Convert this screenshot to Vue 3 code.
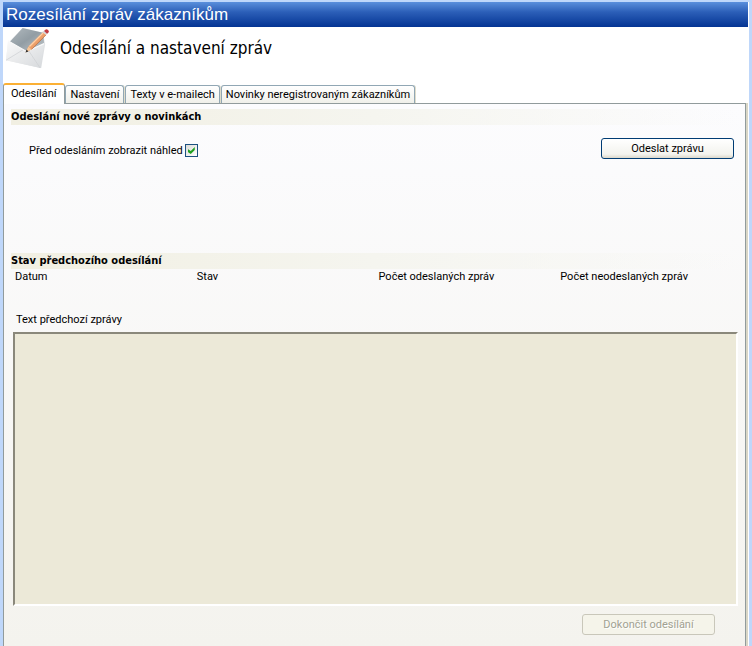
<template>
  <div class="window">
    <h1 class="title-bar">Rozesílání zpráv zákazníkům</h1>

    <header class="page-header">
      <svg class="mail-icon" viewBox="0 0 44 44" aria-hidden="true">
        <defs>
          <linearGradient id="paper" x1="0" y1="0" x2="1" y2="1">
            <stop offset="0" stop-color="#fafafa" />
            <stop offset="1" stop-color="#d6d9dc" />
          </linearGradient>
          <linearGradient id="inside" x1="0" y1="0" x2="1" y2="1">
            <stop offset="0" stop-color="#b3bbc0" />
            <stop offset="0.5" stop-color="#929da4" />
            <stop offset="1" stop-color="#c3c9cd" />
          </linearGradient>
        </defs>
        <path d="M2 16 L17 1 L38 6 L40 18 L36 42 L0 34 Z" fill="url(#paper)" />
        <path d="M3 16 L17 1 L38 6 L39 17 L21 26 Z" fill="url(#inside)" />
        <path d="M2 14 L21 25 L39 17 L35 42 L0 34 Z" fill="url(#paper)" />
        <path d="M0 34 L18 23 M35 42 L23 24" fill="none" stroke="#cfd2d5" stroke-width="0.8" />
        <path d="M2 14 L21 25 L39 17" fill="none" stroke="#fafafa" stroke-width="1.2" />
        <path d="M20 26 L23 20 L38 5 L41 8 L26 23 Z" fill="#eda06a" />
        <path d="M24 20 L38 6" stroke="#ffd0a5" stroke-width="1.4" />
        <path d="M26 23 L41 8" stroke="#bd6b3d" stroke-width="0.8" />
        <path d="M20 26 L23 20 L26 23 Z" fill="#f4c79b" />
        <path d="M20 26 L21 23 L23 25 Z" fill="#333" />
        <path d="M37 5 L40 3 L43 6 L41 8 Z" fill="#d5d8dc" />
        <path d="M39 4 Q41 1 43 3 Q45 5 42 7 Z" fill="#c33b43" />
      </svg>
      <h2>Odesílání a nastavení zpráv</h2>
    </header>

    <div class="tabs" role="tablist">
      <button
        v-for="tab in tabs"
        :key="tab"
        type="button"
        role="tab"
        class="tab"
        :class="{ active: tab === activeTab }"
        :aria-selected="tab === activeTab"
        @click="activeTab = tab"
      >{{ tab }}</button>
    </div>

    <main class="panel">
      <section class="send-section">
        <h3>Odeslání nové zprávy o novinkách</h3>
        <div class="send-row">
          <label class="preview">
            Před odesláním zobrazit náhled
            <input v-model="preview" type="checkbox">
          </label>
          <button type="button" class="btn btn-default">Odeslat zprávu</button>
        </div>
      </section>

      <section class="status-section">
        <h3>Stav předchozího odesílání</h3>
        <table class="status-table">
          <thead>
            <tr>
              <th v-for="col in columns" :key="col" scope="col">{{ col }}</th>
            </tr>
          </thead>
        </table>
        <label class="message-label" for="message">Text předchozí zprávy</label>
        <textarea id="message" class="message" readonly></textarea>
        <div class="actions">
          <button type="button" class="btn" disabled>Dokončit odesílání</button>
        </div>
      </section>
    </main>
  </div>
</template>

<script setup>
import { ref } from 'vue'

const tabs = ['Odesílání', 'Nastavení', 'Texty v e-mailech', 'Novinky neregistrovaným zákazníkům']
const activeTab = ref('Odesílání')

const columns = ['Datum', 'Stav', 'Počet odeslaných zpráv', 'Počet neodeslaných zpráv']

const preview = ref(true)
</script>

<style>
body {
  margin: 0;
}
</style>

<style scoped>
.window {
  box-sizing: border-box;
  display: flex;
  flex-direction: column;
  min-height: 100vh;
  border: solid #bfd7fa;
  border-width: 2px 3px 0;
  background: #fff;
  color: #000;
  font-family: Roboto, "Liberation Sans", Arial, sans-serif;
  font-size: 11px;
  line-height: 14px;
}

h1, h2, h3 {
  margin: 0;
}

.title-bar {
  margin-right: 1px;
  padding: 0 3px;
  background: linear-gradient(#5a8fdc, #2c5fb8 40%, #043493);
  color: #fff;
  font-family: "Liberation Sans", Arial, sans-serif;
  font-size: 17px;
  font-weight: 400;
  line-height: 25px;
}

.page-header {
  display: flex;
  align-items: center;
  gap: 11px;
  height: 42px;
  padding: 0 3px;
}
.mail-icon {
  width: 43px;
  height: 43px;
}
.page-header h2 {
  font-family: "DejaVu Sans Condensed", "DejaVu Sans", sans-serif;
  font-size: 17px;
  font-weight: 400;
  line-height: 20px;
}

.tabs {
  display: flex;
  align-items: flex-end;
  height: 20px;
  padding-top: 14px;
}
.tab {
  height: 18px;
  margin-right: 1px;
  padding: 1px 4px 0;
  border: 1px solid #91a7b4;
  border-bottom: 0;
  border-radius: 3px 3px 0 0;
  background: linear-gradient(#fff, #f0f0ea);
  box-shadow: 1px 0 #dfdccb;
  color: #000;
  font: inherit;
  white-space: nowrap;
}
.tab.active {
  z-index: 1;
  height: 21px;
  margin: 0 0 -1px;
  padding: 0 8px 2px 7px;
  border-color: #919b9c;
  border-top: 2px solid #fbb034;
  background: #fff;
  box-shadow: none;
}

.panel {
  display: flex;
  flex: 1;
  flex-direction: column;
  margin-right: 3px;
  padding: 5px 7px 11px;
  border: 1px solid #919b9c;
  border-bottom: 0;
  background: linear-gradient(#fcfcfe, #f4f3ee);
  box-shadow: 2px 0 #d9d6c6;
}
.panel h3 {
  background: linear-gradient(to right, #f1efe2, #f5f5ef 50%, transparent);
  font-family: "DejaVu Sans Condensed", "DejaVu Sans", sans-serif;
  font-size: 11px;
  font-weight: 700;
  line-height: 16px;
}

.send-section {
  min-height: 144px;
}
.send-row {
  display: flex;
  align-items: center;
  justify-content: space-between;
  padding: 13px 4px 0 18px;
}
.preview {
  display: flex;
  align-items: center;
  gap: 2px;
  padding-top: 4px;
}
.preview input {
  width: 13px;
  height: 13px;
  margin: 0;
  border: 1px solid #1c5180;
  appearance: none;
  background: linear-gradient(135deg, #dcdcd7, #fff);
}
.preview input:checked::before {
  content: "";
  display: block;
  width: 7px;
  height: 7px;
  margin: 2px;
  background: #21a121;
  clip-path: polygon(0 29%, 43% 57%, 100% 0, 100% 43%, 43% 100%, 0 71%);
}

.btn {
  width: 133px;
  height: 21px;
  padding: 0;
  border: 1px solid #c9c7ba;
  border-radius: 3px;
  background: #f5f4ea;
  color: #000;
  font: inherit;
}
.btn-default {
  border-color: #003c74;
  background: linear-gradient(#fff, #f3f3ee 80%, #dcd8cb);
}
.btn:disabled {
  color: #a1a192;
  text-shadow: 1px 1px #fff;
}

.status-section {
  display: flex;
  flex: 1;
  flex-direction: column;
}
.status-table {
  width: 100%;
  border-collapse: collapse;
  table-layout: fixed;
}
.status-table th {
  padding: 1px 0 0 4px;
  font-weight: 400;
  text-align: left;
  white-space: nowrap;
}
.message-label {
  margin-top: 29px;
  padding-left: 5px;
}
.message {
  flex: 1;
  box-sizing: border-box;
  margin: 5px 0 8px 2px;
  border: 2px solid;
  border-color: #8a887b #fff #fff #8a887b;
  outline: 0;
  background: #ece9d8;
  font: inherit;
  resize: none;
}
.actions {
  display: flex;
  justify-content: flex-end;
  padding-right: 23px;
}
</style>
